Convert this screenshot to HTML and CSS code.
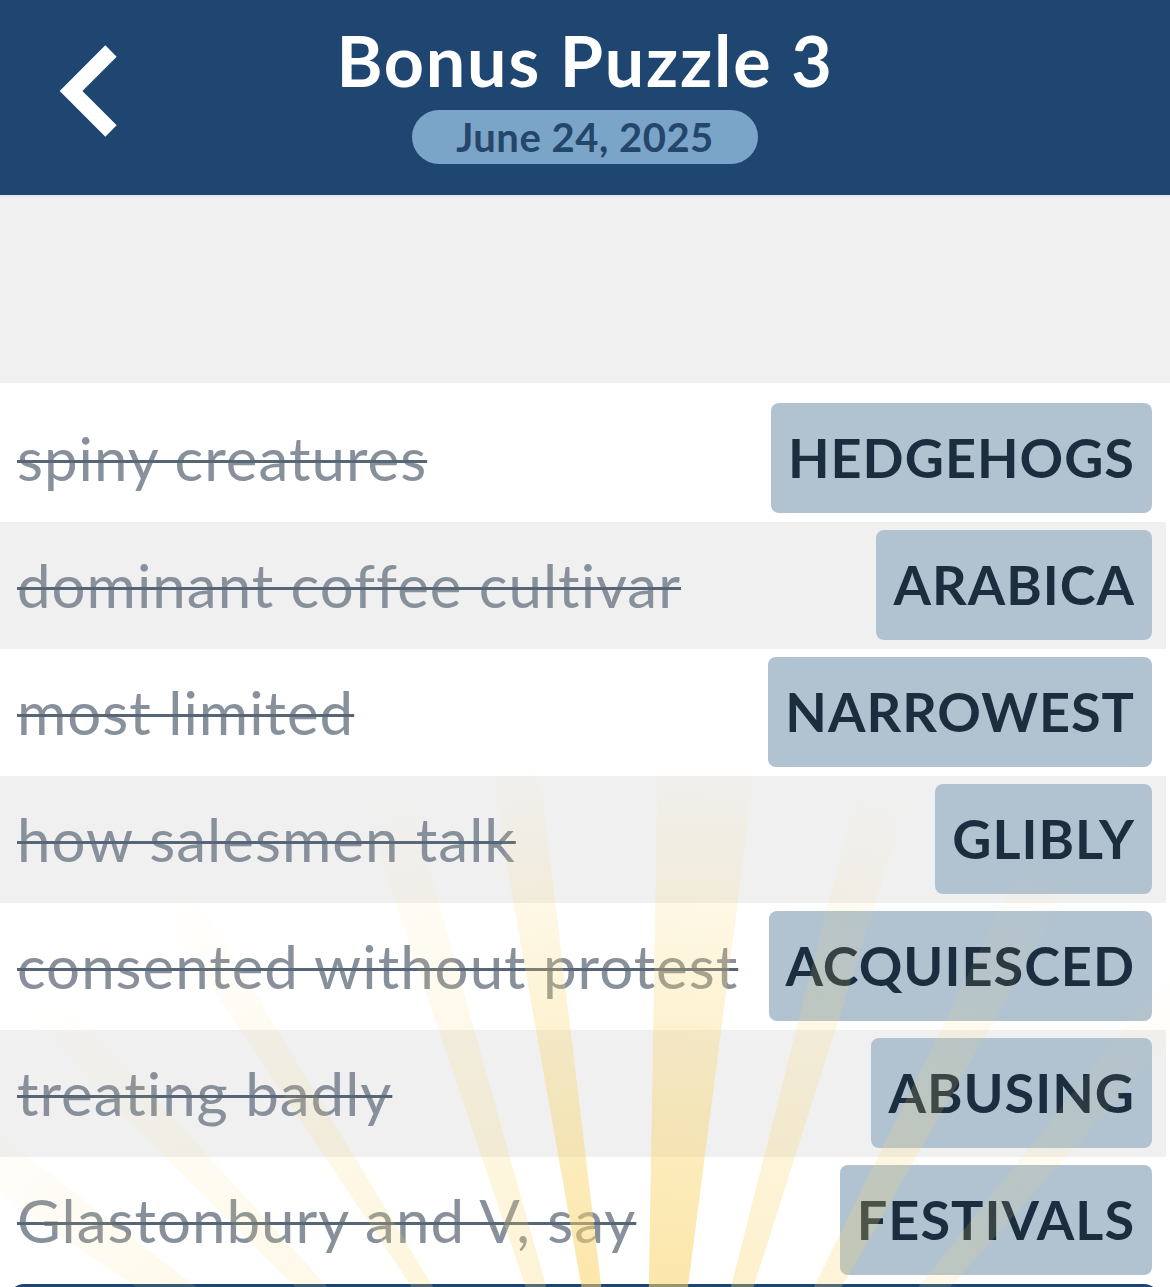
FILE: index.html
```html
<!DOCTYPE html>
<html lang="en">
<head>
    <meta charset="UTF-8">
    <meta name="viewport" content="width=device-width, initial-scale=1.0">
    <title>Bonus Puzzle 3</title>
    <link rel="stylesheet" href="styles.css">
</head>

<body>
    <header class="topbar">
        <a class="back-btn" href="#" aria-label="Back">
            <svg width="80" height="110" viewBox="50 36 80 110">
                <polyline points="111,51 71,91 111,131" fill="none" stroke="#ffffff" stroke-width="16" stroke-linejoin="miter"/>
            </svg>
        </a>
        <div class="title-block">
            <h1>Bonus Puzzle 3</h1>
            <div class="date-pill">June 24, 2025</div>
        </div>
        <div></div>
    </header>

    <div class="spacer"></div>

    <ul class="clue-list">
        <li class="clue-row">
            <span class="clue-text">spiny creatures</span>
            <span class="answer-tile">HEDGEHOGS</span>
        </li>
        <li class="clue-row">
            <span class="clue-text">dominant coffee cultivar</span>
            <span class="answer-tile">ARABICA</span>
        </li>
        <li class="clue-row">
            <span class="clue-text">most limited</span>
            <span class="answer-tile">NARROWEST</span>
        </li>
        <li class="clue-row">
            <span class="clue-text">how salesmen talk</span>
            <span class="answer-tile">GLIBLY</span>
        </li>
        <li class="clue-row">
            <span class="clue-text">consented without protest</span>
            <span class="answer-tile">ACQUIESCED</span>
        </li>
        <li class="clue-row">
            <span class="clue-text">treating badly</span>
            <span class="answer-tile">ABUSING</span>
        </li>
        <li class="clue-row">
            <span class="clue-text">Glastonbury and V, say</span>
            <span class="answer-tile">FESTIVALS</span>
        </li>
    </ul>

    <div class="bottom-bar"></div>

    <!-- celebration rays over the list -->
    <svg class="sunburst" width="1170" height="1287" viewBox="0 0 1170 1287">
        <defs>
            <radialGradient id="rayFade" gradientUnits="userSpaceOnUse" cx="643" cy="1634" r="880">
                <stop offset="0.3" stop-color="#f9d468" stop-opacity="0.7"/>
                <stop offset="0.6" stop-color="#f9d468" stop-opacity="0.45"/>
                <stop offset="1" stop-color="#f9d468" stop-opacity="0"/>
            </radialGradient>
        </defs>
        <g fill="url(#rayFade)">
            <polygon points="643,1634 580,634 640,634" transform="rotate(-52 643 1634)" opacity="0.35"/>
            <polygon points="643,1634 590,634 638,634" transform="rotate(-42 643 1634)" opacity="0.3"/>
            <polygon points="643,1634 596,634 640,634" transform="rotate(-31 643 1634)" opacity="0.4"/>
            <polygon points="643,1634 596,634 650,634" transform="rotate(-16 643 1634)" opacity="0.45"/>
            <polygon points="643,1634 616,634 672,634" transform="rotate(-8.5 643 1634)" opacity="0.9"/>
            <polygon points="643,1634 590,634 702,634" transform="rotate(4 643 1634)" opacity="0.9"/>
            <polygon points="643,1634 612,634 672,634" transform="rotate(16 643 1634)" opacity="0.55"/>
            <polygon points="643,1634 612,634 674,634" transform="rotate(28 643 1634)" opacity="0.45"/>
            <polygon points="643,1634 616,634 670,634" transform="rotate(40 643 1634)" opacity="0.3"/>
        </g>
    </svg>
</body>
</html>
```

FILE: styles.css
```css
html {
    overflow: hidden;
}

body {
    margin: 0;
    position: relative;
    background-color: #ffffff;
    font-family: 'Lato', 'Noto Sans', sans-serif;
}

.topbar {
    display: grid;
    grid-template-columns: 1fr auto 1fr;
    align-items: start;
    height: 195px;
    background-color: #1e4670;
    border-bottom: 2px solid #e4e9ef;
}

.back-btn {
    display: block;
    width: 80px;
    height: 110px;
    margin: 36px 0 0 50px;
}

.back-btn svg {
    display: block;
}

.title-block {
    display: flex;
    flex-direction: column;
    align-items: center;
    padding-top: 20px;
}

h1 {
    margin: 0;
    font-size: 70px;
    line-height: 80px;
    font-weight: 700;
    letter-spacing: 1.8px;
    color: #ffffff;
}

.date-pill {
    margin-top: 10px;
    height: 54px;
    padding: 0 44px;
    border-radius: 27px;
    background-color: #7aa4c8;
    color: #25466b;
    font-size: 40px;
    font-weight: 700;
    letter-spacing: 0.5px;
    line-height: 54px;
}

.spacer {
    height: 186px;
    background-color: #f0f0f0;
}

.clue-list {
    list-style: none;
    margin: 0;
    padding: 0 4px 0 0;
    background-color: #ffffff;
}

.clue-row {
    display: flex;
    align-items: center;
    justify-content: space-between;
    gap: 20px;
    padding: 8px 14px 9px 17px;
}

.clue-row:first-child {
    padding-top: 20px;
}

.clue-row:nth-child(even) {
    background-color: #f0f0f0;
}

.clue-text {
    font-size: 60px;
    font-weight: 400;
    letter-spacing: 1px;
    color: #88919b;
    white-space: nowrap;
    text-decoration: line-through;
    text-decoration-color: #566676;
    text-decoration-thickness: 3px;
}

.answer-tile {
    flex: none;
    height: 110px;
    padding: 0 17px;
    border-radius: 8px;
    background-color: #b1c3d1;
    color: #1b2e40;
    font-size: 54px;
    font-weight: 700;
    letter-spacing: 1px;
    line-height: 110px;
}

.bottom-bar {
    height: 60px;
    margin: 0 10px 0 8px;
    border-radius: 16px 16px 0 0;
    background-color: #1e4670;
}

.sunburst {
    position: absolute;
    top: 0;
    left: 0;
    pointer-events: none;
}
```
